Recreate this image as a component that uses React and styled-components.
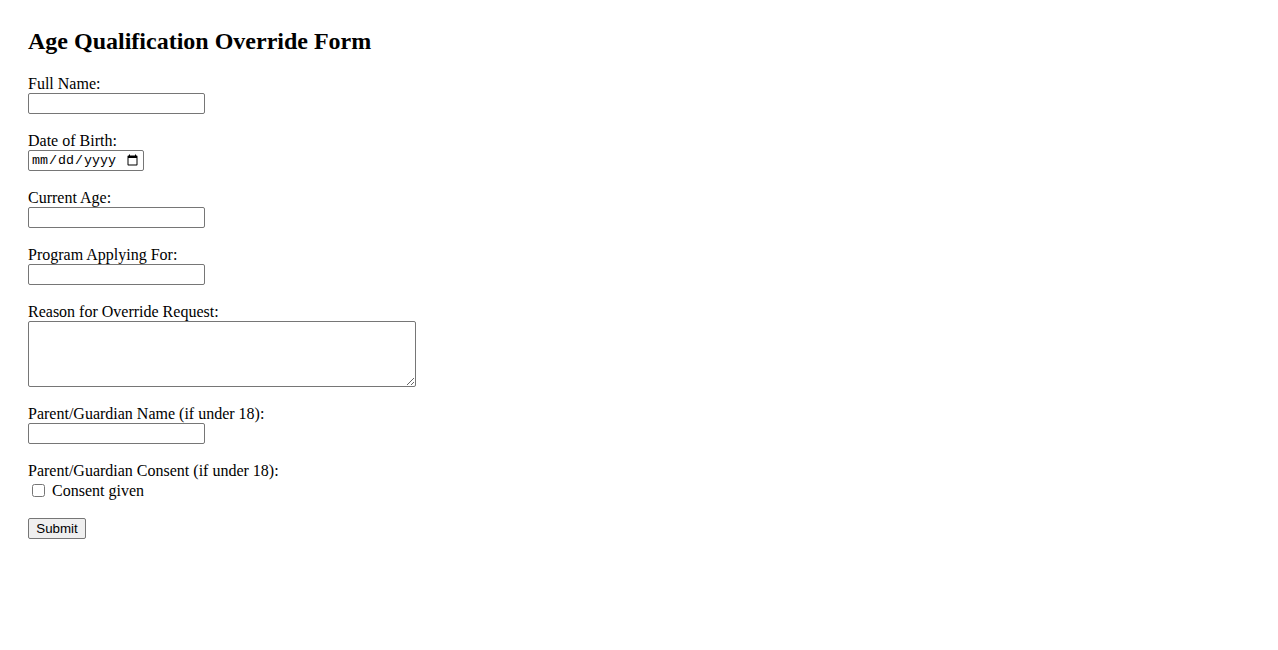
import React from 'react'
import styled, { createGlobalStyle } from 'styled-components'

const GlobalStyle = createGlobalStyle`
  body {
    margin: 8px;
    background: #ffffff;
    color: #000000;
    font-family: "Liberation Serif", "Times New Roman", serif;
    font-size: 16px;
  }
`

const Container = styled.div`
  padding: 19px 20px 20px;
`

const Title = styled.h2`
  margin: 0 0 20px;
  font-size: 24px;
  font-weight: bold;
  line-height: 28px;
`

const Form = styled.form`
  display: flex;
  flex-direction: column;
  align-items: flex-start;
`

const Field = styled.div`
  display: flex;
  flex-direction: column;
  align-items: flex-start;
  margin-bottom: ${(props) => props.gap ?? 18}px;
`

const Label = styled.label`
  line-height: 18px;
`

const TextInput = styled.input`
  box-sizing: border-box;
  width: ${(props) => props.w || 177}px;
  height: 21px;
  margin: 0;
  padding: 1px 2px;
  border: 1px solid #767676;
  border-radius: 2px;
  font-family: "Liberation Mono", monospace;
  font-size: 13.33px;
  background: #ffffff;
`

const TextArea = styled.textarea`
  box-sizing: border-box;
  width: 388px;
  height: 66px;
  margin: 0;
  padding: 2px;
  border: 1px solid #767676;
  border-radius: 2px;
  font-family: "Liberation Mono", monospace;
  font-size: 13.33px;
`

const CheckRow = styled.div`
  display: flex;
  align-items: center;
  height: 20px;
  margin-top: 1px;
`

const Check = styled.input`
  width: 13px;
  height: 13px;
  margin: 0 7px 2px 4px;
`

const Button = styled.button`
  box-sizing: border-box;
  width: 58px;
  height: 21px;
  padding: 1px 0;
  border: 1px solid #767676;
  border-radius: 2px;
  background: #efefef;
  font-family: "Liberation Sans", Arial, sans-serif;
  font-size: 13.33px;
  color: #000000;
`

function App() {
  return (
    <Container>
      <GlobalStyle />
      <Title>Age Qualification Override Form</Title>
      <Form onSubmit={(e) => e.preventDefault()}>
        <Field>
          <Label htmlFor="fullName">Full Name:</Label>
          <TextInput id="fullName" type="text" />
        </Field>
        <Field>
          <Label htmlFor="dob">Date of Birth:</Label>
          <TextInput id="dob" type="date" w={116} />
        </Field>
        <Field>
          <Label htmlFor="age">Current Age:</Label>
          <TextInput id="age" type="text" />
        </Field>
        <Field>
          <Label htmlFor="program">Program Applying For:</Label>
          <TextInput id="program" type="text" />
        </Field>
        <Field>
          <Label htmlFor="reason">Reason for Override Request:</Label>
          <TextArea id="reason" />
        </Field>
        <Field>
          <Label htmlFor="guardian">Parent/Guardian Name (if under 18):</Label>
          <TextInput id="guardian" type="text" />
        </Field>
        <Field gap={17}>
          <Label>Parent/Guardian Consent (if under 18):</Label>
          <CheckRow>
            <Check id="consent" type="checkbox" />
            <label htmlFor="consent">Consent given</label>
          </CheckRow>
        </Field>
        <Button type="submit">Submit</Button>
      </Form>
    </Container>
  )
}

export default App
